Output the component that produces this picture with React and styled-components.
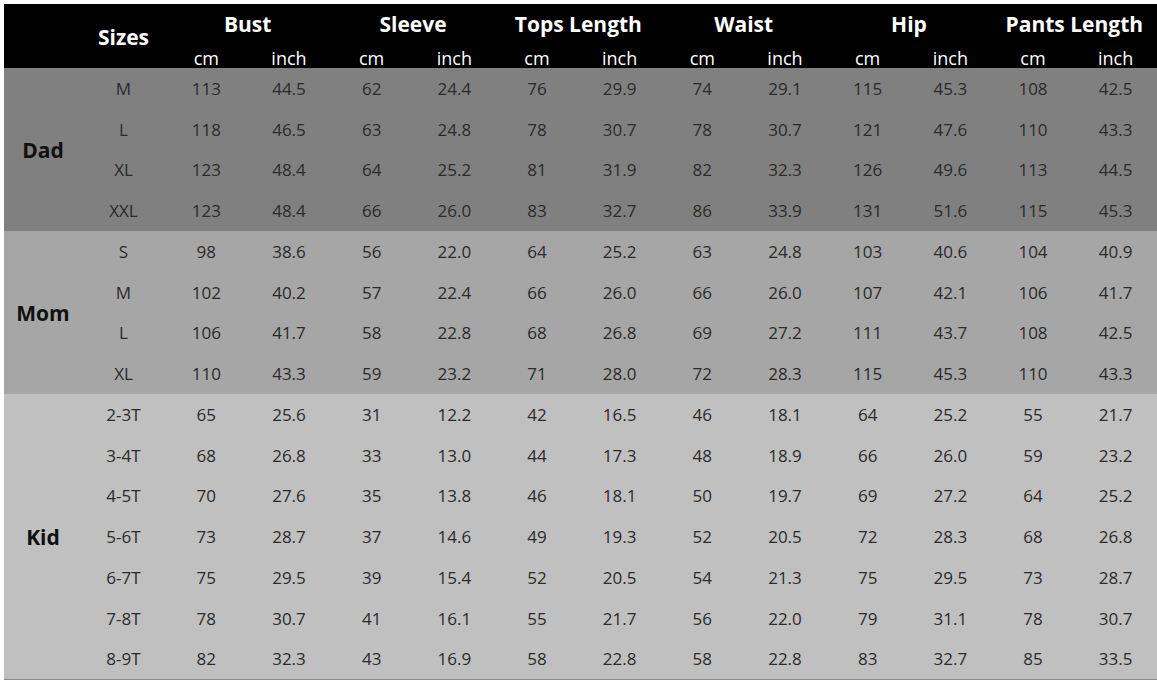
import React from 'react'
import styled, { createGlobalStyle } from 'styled-components'

const GlobalStyle = createGlobalStyle`
  html, body {
    margin: 0;
    padding: 0;
    background: #ffffff;
  }
  body {
    font-family: "Open Sans", "Liberation Sans", sans-serif;
  }
`

const COLS = '78px 83px repeat(12, 1fr)'

const Page = styled.div`
  padding: 4px 0 0 4px;
  width: 1157px;
  box-sizing: border-box;
`
const Table = styled.div`
  display: flex;
  flex-direction: column;
  border-bottom: 1px solid #8a8a8a;
`
const Header = styled.div`
  display: grid;
  grid-template-columns: ${COLS};
  grid-template-rows: 40px 24px;
  background: #000000;
  color: #ffffff;
`
const SizesHead = styled.div`
  grid-column: 2;
  grid-row: 1 / span 2;
  display: flex;
  align-items: center;
  justify-content: center;
  font-weight: 700;
  font-size: 21px;
  padding-top: 1px;
`
const GroupHead = styled.div`
  grid-row: 1;
  grid-column: ${p => p.$col} / span 2;
  display: flex;
  align-items: center;
  justify-content: center;
  font-weight: 700;
  font-size: 21px;
  white-space: nowrap;
`
const UnitHead = styled.div`
  grid-row: 2;
  grid-column: ${p => p.$col};
  display: flex;
  align-items: center;
  justify-content: center;
  font-size: 18px;
  padding-top: 3px;
`
const Section = styled.div`
  display: grid;
  grid-template-columns: ${COLS};
  grid-auto-rows: 40.75px;
  background: ${p => p.$bg};
  color: #2b2b2b;
`
const GroupLabel = styled.div`
  grid-column: 1;
  grid-row: 1 / span ${p => p.$span};
  display: flex;
  align-items: center;
  justify-content: center;
  font-weight: 700;
  font-size: 21px;
  color: #111111;
`
const Cell = styled.div`
  display: flex;
  align-items: center;
  justify-content: center;
  font-size: 17px;
`

const measures = ['Bust', 'Sleeve', 'Tops Length', 'Waist', 'Hip', 'Pants Length']

const groups = [
  {
    name: 'Dad',
    bg: '#808080',
    rows: [
      ['M', 113, 44.5, 62, 24.4, 76, 29.9, 74, 29.1, 115, 45.3, 108, 42.5],
      ['L', 118, 46.5, 63, 24.8, 78, 30.7, 78, 30.7, 121, 47.6, 110, 43.3],
      ['XL', 123, 48.4, 64, 25.2, 81, 31.9, 82, 32.3, 126, 49.6, 113, 44.5],
      ['XXL', 123, 48.4, 66, 26.0, 83, 32.7, 86, 33.9, 131, 51.6, 115, 45.3],
    ],
  },
  {
    name: 'Mom',
    bg: '#a6a6a6',
    rows: [
      ['S', 98, 38.6, 56, 22.0, 64, 25.2, 63, 24.8, 103, 40.6, 104, 40.9],
      ['M', 102, 40.2, 57, 22.4, 66, 26.0, 66, 26.0, 107, 42.1, 106, 41.7],
      ['L', 106, 41.7, 58, 22.8, 68, 26.8, 69, 27.2, 111, 43.7, 108, 42.5],
      ['XL', 110, 43.3, 59, 23.2, 71, 28.0, 72, 28.3, 115, 45.3, 110, 43.3],
    ],
  },
  {
    name: 'Kid',
    bg: '#c0c0c0',
    rows: [
      ['2-3T', 65, 25.6, 31, 12.2, 42, 16.5, 46, 18.1, 64, 25.2, 55, 21.7],
      ['3-4T', 68, 26.8, 33, 13.0, 44, 17.3, 48, 18.9, 66, 26.0, 59, 23.2],
      ['4-5T', 70, 27.6, 35, 13.8, 46, 18.1, 50, 19.7, 69, 27.2, 64, 25.2],
      ['5-6T', 73, 28.7, 37, 14.6, 49, 19.3, 52, 20.5, 72, 28.3, 68, 26.8],
      ['6-7T', 75, 29.5, 39, 15.4, 52, 20.5, 54, 21.3, 75, 29.5, 73, 28.7],
      ['7-8T', 78, 30.7, 41, 16.1, 55, 21.7, 56, 22.0, 79, 31.1, 78, 30.7],
      ['8-9T', 82, 32.3, 43, 16.9, 58, 22.8, 58, 22.8, 83, 32.7, 85, 33.5],
    ],
  },
]

const fmt = (v, i) => (i > 0 && i % 2 === 0 ? Number(v).toFixed(1) : String(v))

export default function App() {
  return (
    <Page>
      <GlobalStyle />
      <Table>
        <Header>
          <SizesHead>Sizes</SizesHead>
          {measures.map((m, i) => (
            <GroupHead key={m} $col={3 + i * 2}>{m}</GroupHead>
          ))}
          {measures.map((m, i) => (
            <React.Fragment key={m + 'u'}>
              <UnitHead $col={3 + i * 2}>cm</UnitHead>
              <UnitHead $col={4 + i * 2}>inch</UnitHead>
            </React.Fragment>
          ))}
        </Header>
        {groups.map(g => (
          <Section key={g.name} $bg={g.bg}>
            <GroupLabel $span={g.rows.length}>{g.name}</GroupLabel>
            {g.rows.map((r, ri) =>
              r.map((v, ci) => (
                <Cell key={ri + '-' + ci} style={{ gridColumn: ci + 2, gridRow: ri + 1 }}>
                  {fmt(v, ci)}
                </Cell>
              ))
            )}
          </Section>
        ))}
      </Table>
    </Page>
  )
}
